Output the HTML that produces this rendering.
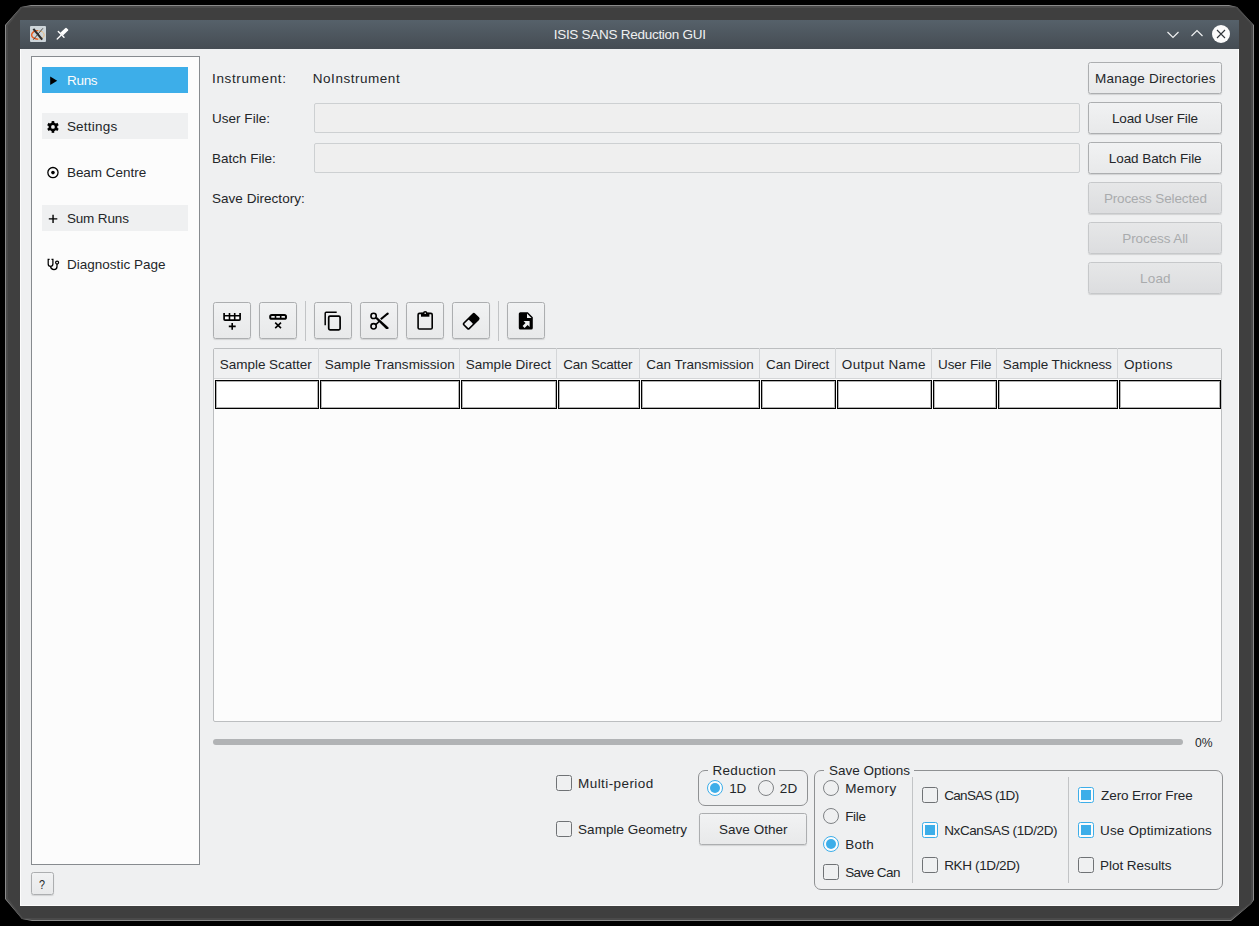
<!DOCTYPE html>
<html><head><meta charset="utf-8">
<style>
*{box-sizing:border-box;margin:0;padding:0}
html,body{width:1259px;height:926px;overflow:hidden;background:#000}
body{position:relative;font-family:"Liberation Sans",sans-serif;font-size:13.5px;color:#232629}
.a{position:absolute}
.t{position:absolute;white-space:pre;line-height:1}
#frame{left:5px;top:5px;width:1249px;height:916px;background:#8a8a8a;clip-path:polygon(26px 0,calc(100% - 25px) 0,calc(100% - 17px) 2px,calc(100% - 3px) 17px,100% 20px,100% calc(100% - 21px),calc(100% - 3px) calc(100% - 17px),calc(100% - 23px) 100%,27px 100%,17px calc(100% - 2px),0 calc(100% - 22px),0 20px,16px 2px)}
#frame2{left:6px;top:6px;width:1247px;height:914px;background:#4a4a4a;clip-path:polygon(25px 0,calc(100% - 24px) 0,calc(100% - 16px) 1px,calc(100% - 2px) 16px,100% 19px,100% calc(100% - 20px),calc(100% - 2px) calc(100% - 16px),calc(100% - 22px) 100%,26px 100%,16px calc(100% - 1px),0 calc(100% - 21px),0 19px,15px 1px)}
#frame3{left:8px;top:8px;width:1243px;height:910px;background:#3f3f3f;clip-path:polygon(24px 0,calc(100% - 23px) 0,calc(100% - 15px) 0px,calc(100% - 1px) 15px,100% 18px,100% calc(100% - 19px),calc(100% - 1px) calc(100% - 15px),calc(100% - 21px) 100%,25px 100%,15px calc(100% - 0px),0 calc(100% - 20px),0 18px,14px 0px)}
#title{left:20px;top:20px;width:1219px;height:29px;background:linear-gradient(#56616a,#454c53)}
#content{left:20px;top:49px;width:1219px;height:857px;background:#eff0f1;border:1px solid #fcfcfc;border-top:0}
.side{left:31px;top:56px;width:169px;height:809px;background:#fcfcfc;border:1px solid #878b8f}
.item{left:42px;width:146px;height:26px}
.btn{border:1px solid #acaeb0;border-radius:2.5px;background:linear-gradient(#f1f2f3,#e8e9ea);box-shadow:0 1px 1px rgba(0,0,0,.12)}
.btn.dis{border-color:#c6c8ca;background:linear-gradient(#e6e7e8,#dcdddf);color:#a9abad}
.le{border:1px solid #cdd0d2;border-radius:2px;background:#efefef}
.cb{width:16px;height:16px;border:1px solid #6f7275;border-radius:2.5px;background:#eff0f1}
.cb.on{border-color:#3daee9;background:#fcfcfc}
.cb.on:after{content:"";position:absolute;left:2px;top:2px;width:10px;height:10px;background:#3daee9}
.rb{width:16px;height:16px;border:1px solid #7f8285;border-radius:50%;background:#eff0f1}
.rb.on{border-color:#3daee9;background:#fcfcfc}
.rb.on:after{content:"";position:absolute;left:2px;top:2px;width:10px;height:10px;border-radius:50%;background:#3daee9}
.gb{border:1px solid #8f9193;border-radius:7px}
.hd{top:348px;height:31px;border-right:1px solid #d4d6d8}
.cell{top:380px;height:29px;border:1px solid #000;box-shadow:inset 0 0 0 1px rgba(0,0,0,.3);background:#fff}
</style></head>
<body>
<div id="frame" class="a"></div>
<div id="frame2" class="a"></div>
<div id="frame3" class="a"></div>
<div id="title" class="a"></div>
<div id="content" class="a"></div>

<!-- titlebar -->
<div class="a" style="left:30px;top:26px;width:16px;height:16px;background:#cdd5da;border-radius:1px"></div>
<svg class="a" style="left:30px;top:26px" width="16" height="16" viewBox="0 0 16 16">
 <path d="M7.9 4.6 A6.3 4.3 0 0 0 7.9 13.2" fill="none" stroke="#e85a1e" stroke-width="1.4"/>
 <path d="M7.9 4.6 A6.3 4.3 0 0 1 7.9 13.2" fill="none" stroke="#e6b87a" stroke-width="1"/>
 <path d="M3.4 2.8 L12.2 13.6" stroke="#2a2a2a" stroke-width="2.1"/>
 <path d="M12.9 2.3 L3.3 13.7" stroke="#3a3a3a" stroke-width="0.9"/>
</svg>
<svg class="a" style="left:56px;top:27px" width="13" height="13" viewBox="0 0 13 13">
 <path d="M1.2 12 L5 8.2" stroke="#fff" stroke-width="1.3" stroke-linecap="round"/>
 <path d="M2.3 4.6 L8 10.3" stroke="#fff" stroke-width="1.4" stroke-linecap="round"/>
 <path d="M4.3 5.8 L9.5 0.9 Q10 0.5 10.5 0.9 L12.1 2.5 Q12.5 3 12.1 3.5 L7 8.6 Z" fill="#fff"/>
</svg>
<svg class="a" style="left:1166px;top:29.5px" width="14" height="10" viewBox="0 0 14 10"><path d="M1.5 2 L7 7.5 L12.5 2" fill="none" stroke="#eff0f1" stroke-width="1.2"/></svg>
<svg class="a" style="left:1190px;top:28px" width="14" height="10" viewBox="0 0 14 10"><path d="M1.5 8 L7 2.5 L12.5 8" fill="none" stroke="#eff0f1" stroke-width="1.2"/></svg>
<svg class="a" style="left:1211px;top:24px" width="20" height="20" viewBox="0 0 20 20"><circle cx="10" cy="10" r="9" fill="#fcfcfc"/><path d="M6 6 L14 14 M14 6 L6 14" stroke="#31363b" stroke-width="1.1"/></svg>

<!-- sidebar -->
<div class="a side"></div>
<div class="a item" style="top:67px;background:#3daee9"></div>
<div class="a item" style="top:113px;background:#eff0f1"></div>
<div class="a item" style="top:205px;background:#eff0f1"></div>
<svg class="a" style="left:40px;top:60px" width="30" height="220" viewBox="40 60 30 220">
 <path d="M50.2 76.6 L57.2 80.8 L50.2 85 Z" fill="#000"/>
 <g transform="translate(52.95 126.95)">
  <circle r="4.4" fill="#000"/>
  <rect x="-1.3" y="-5.9" width="2.6" height="11.8" fill="#000"/>
  <rect x="-1.3" y="-5.9" width="2.6" height="11.8" fill="#000" transform="rotate(60)"/>
  <rect x="-1.3" y="-5.9" width="2.6" height="11.8" fill="#000" transform="rotate(-60)"/>
  <circle r="1.9" fill="#eff0f1"/>
 </g>
 <circle cx="52.95" cy="172.6" r="5.1" fill="none" stroke="#000" stroke-width="1.3"/>
 <circle cx="52.95" cy="172.6" r="1.8" fill="#000"/>
 <path d="M48.8 218.9 H57.3 M53.05 214.7 V223.1" stroke="#000" stroke-width="1.4"/>
 <path d="M49.6 259.4 H48.2 V264 Q48.2 266.4 50.5 266.4 Q52.9 266.4 52.9 264 V259.4 H51.5 M50.5 266.4 Q51 269.6 54 269.6 Q57 269.6 57 266.5 V263.8" fill="none" stroke="#000" stroke-width="1.25"/>
 <circle cx="57.1" cy="262.6" r="1.5" fill="none" stroke="#000" stroke-width="1.2"/>
</svg>

<!-- form -->
<div class="a le" style="left:314px;top:103px;width:766px;height:30px"></div>
<div class="a le" style="left:314px;top:143px;width:766px;height:30px"></div>

<div class="a btn" style="left:1088px;top:62px;width:134px;height:32px"></div>
<div class="a btn" style="left:1088px;top:102px;width:134px;height:32px"></div>
<div class="a btn" style="left:1088px;top:142px;width:134px;height:32px"></div>
<div class="a btn dis" style="left:1088px;top:182px;width:134px;height:32px"></div>
<div class="a btn dis" style="left:1088px;top:222px;width:134px;height:32px"></div>
<div class="a btn dis" style="left:1088px;top:262px;width:134px;height:32px"></div>

<!-- toolbar -->
<div class="a btn" style="left:213px;top:302px;width:38px;height:37px"></div>
<div class="a btn" style="left:259px;top:302px;width:38px;height:37px"></div>
<div class="a" style="left:305px;top:301px;width:1px;height:40px;background:#c2c4c6"></div>
<div class="a btn" style="left:314px;top:302px;width:38px;height:37px"></div>
<div class="a btn" style="left:360px;top:302px;width:38px;height:37px"></div>
<div class="a btn" style="left:406px;top:302px;width:38px;height:37px"></div>
<div class="a btn" style="left:452px;top:302px;width:38px;height:37px"></div>
<div class="a" style="left:498px;top:301px;width:1px;height:40px;background:#c2c4c6"></div>
<div class="a btn" style="left:507px;top:302px;width:38px;height:37px"></div>
<svg class="a" style="left:210px;top:300px" width="340" height="40" viewBox="210 300 340 40">
 <!-- insert row -->
 <rect x="224.1" y="315.7" width="16" height="4.4" fill="#fcfcfc"/>
 <path d="M224.1 312.9 V319.2 Q224.1 320.1 225 320.1 H239.2 Q240.1 320.1 240.1 319.2 V312.9" fill="none" stroke="#000" stroke-width="1.7"/>
 <path d="M224.1 315.7 H240.1 M229.5 312.9 V320.1 M234.7 312.9 V320.1" stroke="#000" stroke-width="1.6"/>
 <path d="M228.8 326.4 H235.7 M232.2 323.1 V329.7" stroke="#000" stroke-width="1.6"/>
 <!-- delete row -->
 <rect x="270.2" y="314.9" width="15.8" height="3.9" rx="1.6" fill="none" stroke="#000" stroke-width="2"/>
 <path d="M275.5 314.9 V318.8 M280.7 314.9 V318.8" stroke="#000" stroke-width="1.6"/>
 <path d="M275.2 322.7 L281 328.1 M281 322.7 L275.2 328.1" stroke="#000" stroke-width="1.6"/>
 <!-- copy -->
 <path d="M325.2 325.2 V313.3 Q325.2 312.3 326.2 312.3 H336.7" fill="none" stroke="#000" stroke-width="1.5"/>
 <rect x="328.7" y="316.1" width="11.4" height="13.7" rx="1.3" fill="none" stroke="#000" stroke-width="1.7"/>
 <!-- cut -->
 <circle cx="373.6" cy="315.9" r="2.65" fill="none" stroke="#000" stroke-width="1.6"/>
 <circle cx="373.6" cy="326.3" r="2.65" fill="none" stroke="#000" stroke-width="1.6"/>
 <path d="M375.4 318.6 L376.9 317.1 L388.6 327.5 L388.4 328.9 L386.1 328.9 Z" fill="#000"/>
 <path d="M375.8 324.6 L379.6 321" stroke="#000" stroke-width="1.6"/>
 <path d="M380.1 318.5 L387.3 312.5 L388.9 312.9 L388.4 314.2 L381.5 320.1 Z" fill="#000"/>
 <!-- paste -->
 <rect x="418.1" y="313.4" width="14.1" height="15.6" rx="1.3" fill="none" stroke="#000" stroke-width="1.6"/>
 <rect x="421" y="312.8" width="8.4" height="3.9" fill="#000"/>
 <circle cx="425.2" cy="313.2" r="2.2" fill="#000"/>
 <circle cx="425.2" cy="313.2" r="0.8" fill="#eff0f1"/>
 <!-- erase -->
 <g transform="translate(471.1 321.3) rotate(-45)">
  <rect x="-8.4" y="-4.6" width="16.8" height="9.2" rx="1.8" fill="#000"/>
  <rect x="-6.8" y="-3" width="6.4" height="6" rx="0.6" fill="#eff0f1"/>
 </g>
 <!-- export -->
 <path d="M520 312.2 H527.8 L532.8 317.2 V328 Q532.8 329.6 531.2 329.6 H520.4 Q518.8 329.6 518.8 328 V313.8 Q518.8 312.2 520.4 312.2 Z" fill="#000"/>
 <path d="M527 313.5 V317.9 H531.5 Z" fill="#eff0f1"/>
 <path d="M523.5 321.1 H529.6 V327.1 L527.6 325.1 L524.6 328 L522.6 326 L525.5 323.1 Z" fill="#eff0f1"/>
</svg>

<!-- table -->
<div class="a" style="left:213px;top:348px;width:1009px;height:374px;background:#fcfcfc;border:1px solid #bcbec0;border-radius:2px"></div>
<div class="a" style="left:214px;top:349px;width:1007px;height:30px;background:#eff0f1;border-bottom:1px solid #d4d6d8"></div>
<div class="a hd" style="left:214px;width:105px"></div>
<div class="a hd" style="left:319px;width:141px"></div>
<div class="a hd" style="left:460px;width:97px"></div>
<div class="a hd" style="left:557px;width:83px"></div>
<div class="a hd" style="left:640px;width:120px"></div>
<div class="a hd" style="left:760px;width:76px"></div>
<div class="a hd" style="left:836px;width:96px"></div>
<div class="a hd" style="left:932px;width:65px"></div>
<div class="a hd" style="left:997px;width:121px"></div>
<div class="a cell" style="left:215px;width:104px"></div>
<div class="a cell" style="left:320px;width:140px"></div>
<div class="a cell" style="left:461px;width:96px"></div>
<div class="a cell" style="left:558px;width:82px"></div>
<div class="a cell" style="left:641px;width:119px"></div>
<div class="a cell" style="left:761px;width:75px"></div>
<div class="a cell" style="left:837px;width:95px"></div>
<div class="a cell" style="left:933px;width:64px"></div>
<div class="a cell" style="left:998px;width:120px"></div>
<div class="a cell" style="left:1119px;width:102px"></div>

<!-- progress -->
<div class="a" style="left:213px;top:739px;width:970px;height:6px;border-radius:3px;background:#b1b3b5"></div>

<!-- bottom -->
<div class="a cb" style="left:556px;top:775px"></div>
<div class="a cb" style="left:556px;top:821px"></div>

<div class="a gb" style="left:698px;top:770px;width:110px;height:36px"></div>
<div class="a" style="left:708px;top:768px;width:71px;height:4px;background:#eff0f1"></div>
<div class="a rb on" style="left:707px;top:780px"></div>
<div class="a rb" style="left:758px;top:780px"></div>
<div class="a btn" style="left:699px;top:813px;width:108px;height:32px"></div>

<div class="a gb" style="left:814px;top:770px;width:409px;height:120px"></div>
<div class="a" style="left:824px;top:768px;width:90px;height:4px;background:#eff0f1"></div>
<div class="a rb" style="left:823px;top:780px"></div>
<div class="a rb" style="left:823px;top:808px"></div>
<div class="a rb on" style="left:823px;top:836px"></div>
<div class="a cb" style="left:823px;top:864px"></div>
<div class="a" style="left:912px;top:777px;width:1px;height:106px;background:#c2c4c6"></div>
<div class="a cb" style="left:922px;top:787px"></div>
<div class="a cb on" style="left:922px;top:822px"></div>
<div class="a cb" style="left:922px;top:857px"></div>
<div class="a" style="left:1068px;top:777px;width:1px;height:106px;background:#c2c4c6"></div>
<div class="a cb on" style="left:1078px;top:787px"></div>
<div class="a cb on" style="left:1078px;top:822px"></div>
<div class="a cb" style="left:1078px;top:857px"></div>

<!-- help -->
<div class="a btn" style="left:31px;top:872px;width:23px;height:23px"></div>

<div class="t" style="left:553.70px;top:28px;letter-spacing:-0.273px;color:#eff0f1">ISIS SANS Reduction GUI</div>
<div class="t" style="left:67.10px;top:74px;letter-spacing:-0.333px;color:#fcfcfc">Runs</div>
<div class="t" style="left:66.90px;top:120px;letter-spacing:0.229px">Settings</div>
<div class="t" style="left:66.90px;top:166px;letter-spacing:-0.02px">Beam Centre</div>
<div class="t" style="left:66.90px;top:212px;letter-spacing:-0.143px">Sum Runs</div>
<div class="t" style="left:66.90px;top:258px;letter-spacing:0.029px">Diagnostic Page</div>
<div class="t" style="left:212.00px;top:72px;letter-spacing:0.64px">Instrument:</div>
<div class="t" style="left:312.80px;top:72px;letter-spacing:0.527px">NoInstrument</div>
<div class="t" style="left:211.90px;top:112px;letter-spacing:0.044px">User File:</div>
<div class="t" style="left:211.90px;top:152px">Batch File:</div>
<div class="t" style="left:211.90px;top:192px;letter-spacing:0.043px">Save Directory:</div>
<div class="t" style="left:1095.00px;top:72px;letter-spacing:0.2px">Manage Directories</div>
<div class="t" style="left:1112.00px;top:112px;letter-spacing:-0.138px">Load User File</div>
<div class="t" style="left:1108.80px;top:152px;letter-spacing:-0.071px">Load Batch File</div>
<div class="t" style="left:1103.90px;top:192px;letter-spacing:-0.133px;color:#a9abad">Process Selected</div>
<div class="t" style="left:1122.30px;top:232px;letter-spacing:-0.1px;color:#a9abad">Process All</div>
<div class="t" style="left:1140.10px;top:272px;letter-spacing:0.133px;color:#a9abad">Load</div>
<div class="t" style="left:219.70px;top:358px;letter-spacing:-0.015px">Sample Scatter</div>
<div class="t" style="left:324.70px;top:358px;letter-spacing:0.056px">Sample Transmission</div>
<div class="t" style="left:465.70px;top:358px;letter-spacing:0.05px">Sample Direct</div>
<div class="t" style="left:563.20px;top:358px;letter-spacing:-0.2px">Can Scatter</div>
<div class="t" style="left:646.30px;top:358px;letter-spacing:-0.04px">Can Transmission</div>
<div class="t" style="left:766.10px;top:358px;letter-spacing:-0.067px">Can Direct</div>
<div class="t" style="left:841.80px;top:358px;letter-spacing:0.34px">Output Name</div>
<div class="t" style="left:938.00px;top:358px;letter-spacing:-0.075px">User File</div>
<div class="t" style="left:1002.80px;top:358px;letter-spacing:-0.067px">Sample Thickness</div>
<div class="t" style="left:1123.90px;top:358px;letter-spacing:0.367px">Options</div>
<div class="t" style="left:1194.70px;top:736px;transform:scaleX(0.9);transform-origin:0 0">0%</div>
<div class="t" style="left:578.10px;top:777px;letter-spacing:0.418px">Multi-period</div>
<div class="t" style="left:578.10px;top:823px;letter-spacing:0.014px">Sample Geometry</div>
<div class="t" style="left:712.50px;top:764px;letter-spacing:0.3px">Reduction</div>
<div class="t" style="left:729.30px;top:782px;letter-spacing:-0.4px">1D</div>
<div class="t" style="left:779.70px;top:782px;letter-spacing:0.4px">2D</div>
<div class="t" style="left:719.00px;top:823px;letter-spacing:0.022px">Save Other</div>
<div class="t" style="left:828.90px;top:764px">Save Options</div>
<div class="t" style="left:845.20px;top:782px;letter-spacing:0.44px">Memory</div>
<div class="t" style="left:845.20px;top:810px;letter-spacing:-0.333px">File</div>
<div class="t" style="left:845.20px;top:838px;letter-spacing:0.267px">Both</div>
<div class="t" style="left:845.20px;top:866px;letter-spacing:-0.571px">Save Can</div>
<div class="t" style="left:944.20px;top:789px;letter-spacing:-0.68px">CanSAS (1D)</div>
<div class="t" style="left:944.20px;top:824px;letter-spacing:-0.4px">NxCanSAS (1D/2D)</div>
<div class="t" style="left:944.20px;top:859px;letter-spacing:-0.36px">RKH (1D/2D)</div>
<div class="t" style="left:1101.10px;top:789px;letter-spacing:-0.1px">Zero Error Free</div>
<div class="t" style="left:1100.10px;top:824px;letter-spacing:0.137px">Use Optimizations</div>
<div class="t" style="left:1100.10px;top:859px;letter-spacing:-0.055px">Plot Results</div>
<div class="t" style="left:39.20px;top:878px;transform:scaleX(0.8);transform-origin:0 0">?</div>
</body></html>
